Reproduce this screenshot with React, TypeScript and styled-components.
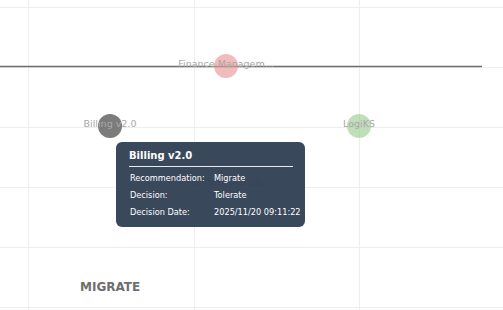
import React from 'react'
import styled, {createGlobalStyle} from 'styled-components'

const Global = createGlobalStyle`
  html, body {
    margin: 0;
    padding: 0;
    background: #fff;
  }
  body {
    font-family: 'DejaVu Sans', 'Open Sans', sans-serif;
  }
`

const Chart = styled.div`
  position: relative;
  width: 503px;
  height: 310px;
  overflow: hidden;
  background: #fff;
`

const Plot = styled.svg`
  display: block;
`

const Tip = styled.div`
  position: absolute;
  left: 116px;
  top: 142px;
  width: 189px;
  height: 85px;
  box-sizing: border-box;
  padding: 7px 12px 8px 13px;
  border-radius: 6px;
  background: rgba(47, 62, 83, 0.95);
  color: #fff;
`

const TipTitle = styled.div`
  font-size: 10px;
  font-weight: bold;
  line-height: 13px;
  padding-bottom: 4px;
  margin-bottom: 5px;
  border-bottom: 1px solid #e8ebef;
`

const TipGrid = styled.div`
  display: grid;
  grid-template-columns: 84px auto;
  row-gap: 4px;
  font-size: 8.2px;
  line-height: 13px;
  padding-left: 1px;
  white-space: nowrap;
`

const QuadLabel = styled.text`
  font-family: 'DejaVu Sans', sans-serif;
  font-weight: bold;
  font-size: 12px;
  fill: #6e6e6e;
`

const PointLabel = styled.text`
  font-family: 'DejaVu Sans', sans-serif;
  font-size: 9.5px;
  fill: #a8a8a8;
`

type Point = {
  name: string
  x: number
  y: number
  color: string
}

const points: Point[] = [
  {name: 'Finance Managem...', x: 226, y: 66, color: 'rgba(232, 150, 150, 0.65)'},
  {name: 'Billing v2.0', x: 110, y: 126, color: 'rgba(110, 110, 110, 0.9)'},
  {name: 'LogiKS', x: 359, y: 126, color: 'rgba(160, 205, 150, 0.65)'},
]

const gridX = [28, 194, 359]
const gridY = [7, 67, 127, 187, 247, 307]

const rows = [
  ['Recommendation:', 'Migrate'],
  ['Decision:', 'Tolerate'],
  ['Decision Date:', '2025/11/20 09:11:22'],
]

const App = () => {
  return (
    <Chart>
      <Global />
      <Plot width={503} height={310}>
        {gridX.map((x) => (
          <line key={'x' + x} x1={x + 0.5} x2={x + 0.5} y1={0} y2={310} stroke='#eeeeee' />
        ))}
        {gridY.map((y) => (
          <line key={'y' + y} x1={0} x2={503} y1={y + 0.5} y2={y + 0.5} stroke='#eeeeee' />
        ))}
        <line x1={0} x2={482} y1={66.5} y2={66.5} stroke='#6f6f6f' strokeWidth={1.6} />
        <PointLabel x={226} y={185} textAnchor='middle'>Inventory Manag...</PointLabel>
        {points.map((p) => (
          <g key={p.name}>
            <circle cx={p.x} cy={p.y} r={12} fill={p.color} />
            <PointLabel x={p.x} y={p.y + 1} textAnchor='middle'>{p.name}</PointLabel>
          </g>
        ))}
        <QuadLabel x={80} y={291}>MIGRATE</QuadLabel>
      </Plot>
      <Tip>
        <TipTitle>Billing v2.0</TipTitle>
        <TipGrid>
          {rows.map(([k, v]) => (
            <React.Fragment key={k}>
              <span>{k}</span>
              <span>{v}</span>
            </React.Fragment>
          ))}
        </TipGrid>
      </Tip>
    </Chart>
  )
}

export default App
